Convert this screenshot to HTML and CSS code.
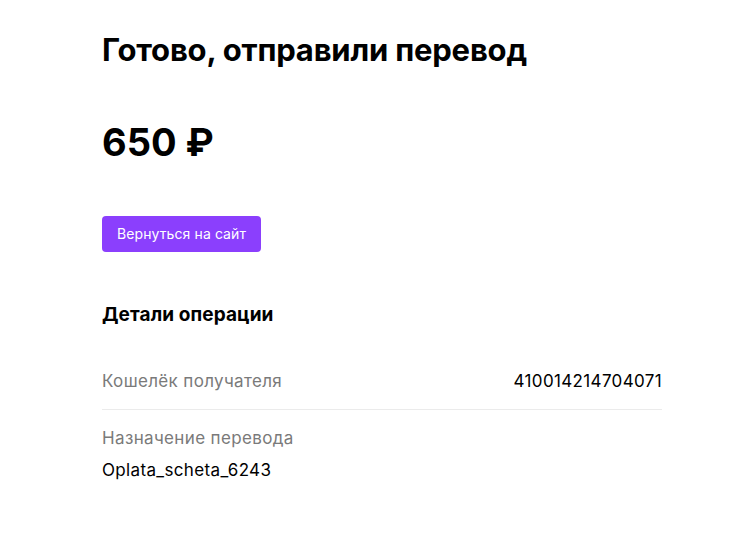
FILE: index.html
```html
<!DOCTYPE html>
<html lang="ru">
<head>
    <meta charset="UTF-8">
    <meta name="viewport" content="width=device-width, initial-scale=1.0">
    <title>Перевод отправлен</title>
    <link rel="stylesheet" href="styles.css">
</head>
<body>
    <div class="page">
        <h1 class="title">Готово, отправили перевод</h1>
        <div class="amount">650 ₽</div>
        <a class="back-btn" href="#">Вернуться на сайт</a>

        <div class="details">
            <h2 class="details-title">Детали операции</h2>
            <div class="row row-inline">
                <span class="label">Кошелёк получателя</span>
                <span class="value">410014214704071</span>
            </div>
            <div class="row">
                <div class="label">Назначение перевода</div>
                <div class="value value-below">Oplata_scheta_6243</div>
            </div>
        </div>
    </div>
</body>
</html>
```

FILE: styles.css
```css
*{
    box-sizing: border-box;
}
body{
    margin: 0;
    font-family: Inter, 'Noto Sans', Arial, sans-serif;
    color: #000;
    background: #fff;
}
.page{
    width: 560px;
    margin-left: 102px;
    padding-top: 30px;
}
.title{
    margin: 0;
    font-size: 31px;
    line-height: 40px;
    font-weight: 700;
    letter-spacing: -0.2px;
}
.amount{
    margin-top: 49px;
    font-size: 38px;
    line-height: 46px;
    font-weight: 700;
}
.back-btn{
    display: inline-block;
    margin-top: 51px;
    height: 36px;
    padding: 0 15px;
    line-height: 36px;
    background: #8b3ffd;
    color: #fff;
    border-radius: 4px;
    font-size: 14px;
    letter-spacing: 0.1px;
    text-decoration: none;
}
.details{
    margin-top: 51px;
}
.details-title{
    margin: 0;
    font-size: 19px;
    line-height: 24px;
    font-weight: 700;
    letter-spacing: 0.1px;
}
.row{
    padding: 16px 0;
    font-size: 17px;
    line-height: 24px;
    letter-spacing: 0.35px;
}
.row-inline{
    display: flex;
    justify-content: space-between;
    margin-top: 26px;
    border-bottom: 1px solid #ebebeb;
}
.label{
    color: #7a7a7a;
}
.row .value{
    color: #000;
}
.value-below{
    margin-top: 8px;
}
```
